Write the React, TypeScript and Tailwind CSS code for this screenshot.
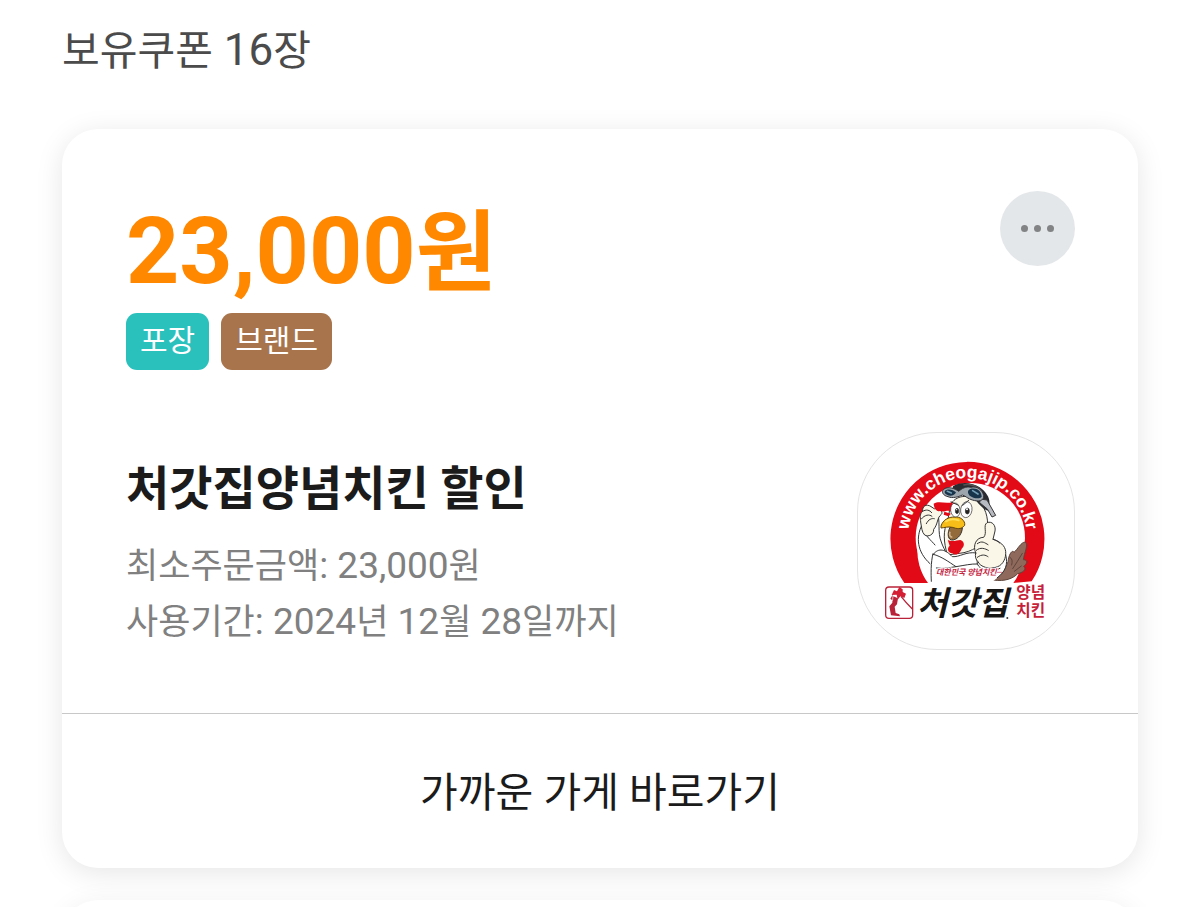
import type { ReactNode } from 'react';

const hangul = "font-['Roboto','Noto_Sans_CJK_KR',sans-serif]";

function Num({ children, className }: { children: ReactNode; className: string }) {
  return <span className={className}>{children}</span>;
}

function Tag({ children, className }: { children: ReactNode; className: string }) {
  return (
    <li className={`flex h-[57px] items-center rounded-[11px] px-[14px] pb-0.5 text-[30px] leading-none text-white ${className}`}>
      {children}
    </li>
  );
}

function BrandLogo() {
  return (
    <svg viewBox="24 24 648 648" className="size-full" role="img" aria-label="처갓집 양념치킨">
      <defs>
        <path id="ring-text" d="M177 369 A178 178 0 1 1 527 369" />
      </defs>

      <path d="M163 474 A231 231 0 1 1 545 469 L490 474 A160 162 0 1 0 234 474 Z" fill="#e20a17" />
      <circle cx="361" cy="338" r="164" fill="#fff" />
      <text fill="#fff" fontFamily="Liberation Sans, sans-serif" fontWeight="700" fontSize="52">
        <textPath href="#ring-text" startOffset="50%" textAnchor="middle">www.cheogajip.co.kr</textPath>
      </text>

      <g stroke="#343434" strokeWidth="3" strokeLinecap="round" strokeLinejoin="round">
        <path d="M430 465 C445 450 468 432 474 410 C477 385 488 373 492 382 C503 373 513 351 526 351 C536 360 523 383 520 404 C536 404 531 417 521 424 C532 434 517 443 503 446 C491 459 466 471 430 465 Z" fill="#8f6a5c" stroke="#5d443b" />
        <path d="M480 397 Q490 402 485 420 M517 385 Q501 412 488 431 M514 423 L493 439" fill="none" stroke="#5d443b" />
        <path d="M248 330 C239 355 242 373 249 386 C240 412 241 450 243 471 L430 468 C466 440 475 420 467 389 L447 345 L270 320 Z" fill="#fff" stroke="none" />
        <path d="M249 386 C242 412 243 450 244 469 M467 389 C475 420 466 440 442 458" fill="none" />
        <path d="M215 302 C198 336 200 380 240 416 M215 302 C220 329 244 346 255 360" fill="none" />
        <path d="M302 239 C315 211 358 204 388 232 C412 254 416 292 411 319 C405 353 379 374 342 383 L292 390 C281 348 278 322 293 286 Z" fill="#fbf7e8" />
        <path d="M260 260 C274 285 260 321 275 354 C281 372 291 379 285 395" fill="none" />
        <path d="M250 388 C274 394 297 411 318 425 C343 421 365 416 382 417 L380 384 C347 379 329 397 307 395 C287 374 266 366 250 388 Z" fill="#fff" />
        <path d="M318 425 C295 428 281 432 259 429 M382 417 C391 438 420 445 450 430" fill="none" />

        <path d="M242 244 C229 235 216 244 218 259 C207 268 212 281 212 291 C215 307 215 321 224 330 C235 337 252 329 251 313 C265 296 260 279 274 268 C282 260 265 249 254 251 Z" fill="#fbf7e8" />
        <path d="M218 259 C228 252 240 255 245 263 M214 282 C224 269 238 267 246 274 M229 296 C235 283 245 279 253 281" fill="none" />

        <path d="M377 384 C367 360 379 337 401 337 C413 323 398 302 411 293 C427 287 438 302 435 318 L429 343 C451 350 465 362 467 379 C469 399 459 419 443 425 C420 435 390 426 384 410 C378 405 374 394 377 384 Z" fill="#fbf7e8" />
        <path d="M382 356 C396 345 405 354 414 359 M379 376 C391 365 406 371 415 376 M382 397 C396 386 407 390 414 395 M429 343 C436 344 443 348 449 354" fill="none" />
      </g>

      <path d="M251 236 C269 226 287 239 309 230 L304 260 C294 252 281 263 269 258 C261 261 252 252 251 236 Z" fill="#e20a17" />
      <path d="M283 260 L303 266 L295 274 L281 269 Z" fill="#e20a17" />
      <path d="M293 344 C306 353 321 345 331 345 C346 349 343 366 335 371 C331 385 317 394 307 385 C292 383 291 369 299 362 Z" fill="#e20a17" />
      <path d="M301 305 C290 325 293 348 310 345 C326 341 336 325 337 309 Z" fill="#936b3b" stroke="#343434" strokeWidth="3" />
      <path d="M300 320 C297 329 300 337 307 336" fill="none" stroke="#d3b188" strokeWidth="5" />
      <path d="M273 303 C279 284 296 276 313 276 C329 273 347 287 344 301 C333 315 320 311 307 307 C294 304 284 308 273 309 Z" fill="#f7bd18" stroke="#65460b" strokeWidth="3" />
      <path d="M288 289 C301 280 315 282 326 286" fill="none" stroke="#ffe05a" strokeWidth="6" strokeLinecap="round" />

      <g stroke="#343434" strokeWidth="2">
        <ellipse cx="316" cy="255" rx="14" ry="21" fill="#fff" transform="rotate(-5 316 255)" />
        <ellipse cx="349" cy="254" rx="17" ry="24" fill="#fff" transform="rotate(8 349 254)" />
        <ellipse cx="321" cy="258" rx="5" ry="8" fill="#242321" />
        <ellipse cx="352" cy="258" rx="6" ry="9" fill="#242321" />
        <path d="M302 230 L326 241 M337 242 L357 225" fill="none" strokeWidth="3" />
      </g>
      <g fill="#fff"><circle cx="320" cy="254" r="2" /><circle cx="351" cy="253" r="3" /></g>

      <path d="M309 184 C333 168 368 173 389 187 C411 202 421 222 418 239 C425 252 421 261 410 256 C389 246 380 224 365 216 L306 199 Z" fill="#292b30" />
      <path d="M340 180 C360 175 386 184 396 201" fill="none" stroke="#575353" strokeWidth="4" />
      <path d="M391 222 L411 225 L437 271 L426 276 L412 252 L389 233 Z" fill="#b7bbc1" stroke="#343434" strokeWidth="3" />
      <path d="M281 193 C292 183 315 190 326 199 C335 191 348 183 362 187 C381 182 397 194 401 212 C402 228 386 231 367 225 C354 222 344 211 337 210 C324 216 308 221 294 215 C279 212 273 200 281 193 Z" fill="#9da6ac" stroke="#34343a" strokeWidth="3" />
      <path d="M285 197 C294 190 309 193 318 202 C314 212 300 215 291 209 C285 206 282 202 285 197 Z" fill="#18344a" />
      <path d="M361 192 C381 187 394 199 395 215 C389 223 370 220 359 212 C351 203 353 195 361 192 Z" fill="#18344a" />
      <path d="M292 199 L304 204 M368 197 L384 207" stroke="#73a0b7" strokeWidth="5" strokeLinecap="round" />

      <text x="258" y="449" fill="#c5253f" stroke="#fff" strokeWidth="5" paintOrder="stroke" fontFamily="Noto Sans CJK KR, sans-serif" fontWeight="700" fontStyle="italic" fontSize="24">대한민국 양념치킨</text>
      <path d="M441 442 H456" stroke="#c5253f" strokeWidth="2" />

      <rect x="107" y="486" width="81" height="94" rx="10" fill="#fff" stroke="#b92339" strokeWidth="4" />
      <path d="M125 510 L132 495 L141 499 L148 486 L158 493 L158 501 L168 506 L163 519 L151 514 L143 524 L140 509 Z" fill="#d31e34" />
      <path d="M128 509 L121 521 L129 527 L130 514 L144 520 L141 538 L134 545 L137 564 L148 568 L150 574 L123 571 L118 544 L127 533 Z" fill="#b92339" />
      <path d="M153 514 Q168 533 187 552" fill="none" stroke="#b92339" strokeWidth="4" />

      <text x="202" y="571" fill="#171615" stroke="#fff" strokeWidth="10" strokeLinejoin="round" paintOrder="stroke" fontFamily="Noto Sans CJK KR, sans-serif" fontWeight="700" fontStyle="italic" fontSize="99">처갓집</text>
      <circle cx="472" cy="579" r="3" fill="#343434" />
      <text fill="#c51f3a" stroke="#fff" strokeWidth="6" paintOrder="stroke" fontFamily="Noto Sans CJK KR, sans-serif" fontWeight="700" fontSize="47">
        <tspan x="499" y="519">양념</tspan>
        <tspan x="499" y="574">치킨</tspan>
      </text>
    </svg>
  );
}

export default function App() {
  return (
    <main className={`flex h-screen flex-col overflow-hidden bg-white px-[62px] ${hangul}`}>
      <h1 className="pt-5 text-[41px] leading-[60px] text-[#4b4b4b]">
        보유쿠폰<Num className="text-[44px]"> 16</Num>장
      </h1>

      <section className="mt-12 flex flex-col gap-8">
        <article className="relative z-10 shrink-0 rounded-[36px] bg-white shadow-[0_5px_28px_rgba(0,0,0,0.10)]">
          <div className="pt-[62px] pr-[63px] pb-[63px] pl-16">
            <div className="flex items-start justify-between">
              <div>
                <p className="flex h-[120px] items-center text-[88px] leading-none font-bold text-[#ff8800]">
                  <span><Num className="text-[93px]">23,000</Num>원</span>
                </p>
                <ul className="mt-0.5 flex gap-3">
                  <Tag className="bg-[#2ac1bc]">포장</Tag>
                  <Tag className="bg-[#a7744c]">브랜드</Tag>
                </ul>
              </div>
              <button type="button" aria-label="더보기" className="flex size-[75px] items-center justify-center gap-1.5 rounded-full bg-[#e4e7e9]">
                <span className="size-[7px] rounded-full bg-[#818384]" />
                <span className="size-[7px] rounded-full bg-[#818384]" />
                <span className="size-[7px] rounded-full bg-[#818384]" />
              </button>
            </div>

            <div className="mt-[62px] flex items-start justify-between">
              <div className="pt-[27px]">
                <h2 className="text-[47px] leading-[60px] font-bold text-[#1b1b1b]">처갓집양념치킨 할인</h2>
                <div className="mt-[19px] text-[35px] leading-[55px] text-[#808080]">
                  <p>최소주문금액<Num className="text-[37px]">: 23,000</Num>원</p>
                  <p>
                    사용기간<Num className="text-[37px]">: 2024</Num>년<Num className="text-[37px]"> 12</Num>월
                    <Num className="text-[37px]"> 28</Num>일까지
                  </p>
                </div>
              </div>
              <div className="size-[218px] shrink-0 overflow-hidden rounded-[80px] border border-[#e4e4e4]">
                <BrandLogo />
              </div>
            </div>
          </div>
          <button type="button" className="block h-[155px] w-full border-t border-[#c8c8c8] pt-1.5 text-[41px] text-[#1b1b1b]">
            가까운 가게 바로가기
          </button>
        </article>
        <article className="h-[740px] shrink-0 rounded-[36px] bg-white shadow-[0_4px_28px_rgba(0,0,0,0.07)]" />
      </section>
    </main>
  );
}
